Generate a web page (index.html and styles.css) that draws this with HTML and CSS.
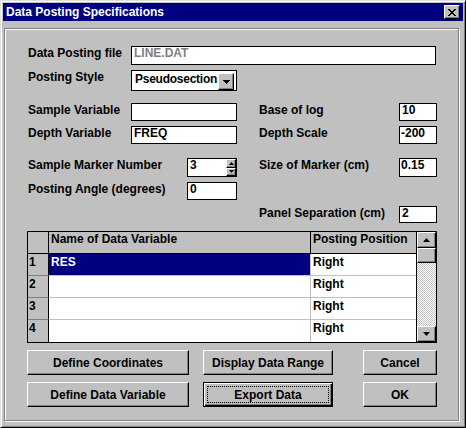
FILE: index.html
```html
<!DOCTYPE html>
<html>
<head>
<meta charset="utf-8">
<link rel="stylesheet" href="styles.css">
</head>
<body>
<div class="window">
  <div class="titlebar">
    <span class="title">Data Posting Specifications</span>
    <span class="close">
      <svg width="8" height="7" viewBox="0 0 8 7" shape-rendering="crispEdges">
        <rect x="0" y="0" width="2" height="1"/><rect x="6" y="0" width="2" height="1"/>
        <rect x="1" y="1" width="2" height="1"/><rect x="5" y="1" width="2" height="1"/>
        <rect x="2" y="2" width="4" height="1"/>
        <rect x="3" y="3" width="2" height="1"/>
        <rect x="2" y="4" width="4" height="1"/>
        <rect x="1" y="5" width="2" height="1"/><rect x="5" y="5" width="2" height="1"/>
        <rect x="0" y="6" width="2" height="1"/><rect x="6" y="6" width="2" height="1"/>
      </svg>
    </span>
  </div>
  <div class="group">
    <div class="row r-file">
      <span class="lbl lbl-a">Data Posting file</span>
      <div class="field disabled w305 h19">LINE.DAT</div>
    </div>
    <div class="row r-style">
      <span class="lbl lbl-a">Posting Style</span>
      <div class="combo">
        <span class="combo-text">Pseudosection</span>
        <span class="combo-btn raised">
          <svg width="7" height="4" viewBox="0 0 7 4" shape-rendering="crispEdges"><polygon points="0,0 7,0 3.5,4"/></svg>
        </span>
      </div>
    </div>
    <div class="row r-sec2">
      <div class="left">
        <span class="lbl lbl-a">Sample Variable</span>
        <div class="field w105"></div>
      </div>
      <div class="right">
        <span class="lbl lbl-r">Base of log</span>
        <div class="field w37">10</div>
      </div>
    </div>
    <div class="row r-gap5">
      <div class="left">
        <span class="lbl lbl-a">Depth Variable</span>
        <div class="field w105">FREQ</div>
      </div>
      <div class="right">
        <span class="lbl lbl-r">Depth Scale</span>
        <div class="field w37 tight">-200</div>
      </div>
    </div>
    <div class="row r-sec3">
      <div class="left">
        <span class="lbl lbl-b">Sample Marker Number</span>
        <div class="field spin w49 h19">
          <span class="spin-val">3</span>
          <span class="spin-btns">
            <span class="spin-btn raised"><svg width="5" height="3" viewBox="0 0 5 3"><polygon points="2.5,0 5,3 0,3"/></svg></span>
            <span class="spin-btn raised"><svg width="5" height="3" viewBox="0 0 5 3"><polygon points="0,0 5,0 2.5,3"/></svg></span>
          </span>
        </div>
      </div>
      <div class="right">
        <span class="lbl lbl-r">Size of Marker (cm)</span>
        <div class="field w37 h19 tight">0.15</div>
      </div>
    </div>
    <div class="row r-gap5">
      <div class="left">
        <span class="lbl lbl-b">Posting Angle (degrees)</span>
        <div class="field w49">0</div>
      </div>
    </div>
    <div class="row r-panel">
      <div class="left"></div>
      <div class="right">
        <span class="lbl lbl-r">Panel Separation (cm)</span>
        <div class="field w37 h17">2</div>
      </div>
    </div>

    <div class="grid">
      <div class="cells">
        <div class="grow head">
          <div class="cell num"></div>
          <div class="cell name">Name of Data Variable</div>
          <div class="cell pos">Posting Position</div>
        </div>
        <div class="grow">
          <div class="cell num">1</div>
          <div class="cell name selected">RES</div>
          <div class="cell pos">Right</div>
        </div>
        <div class="grow">
          <div class="cell num">2</div>
          <div class="cell name"></div>
          <div class="cell pos">Right</div>
        </div>
        <div class="grow">
          <div class="cell num">3</div>
          <div class="cell name"></div>
          <div class="cell pos">Right</div>
        </div>
        <div class="grow last">
          <div class="cell num">4</div>
          <div class="cell name"></div>
          <div class="cell pos">Right</div>
        </div>
      </div>
      <div class="scrollbar">
        <span class="sb-btn raised"><svg width="7" height="4" viewBox="0 0 7 4"><polygon points="3.5,0 7,4 0,4"/></svg></span>
        <span class="sb-thumb raised"></span>
        <span class="sb-track"></span>
        <span class="sb-btn raised"><svg width="7" height="4" viewBox="0 0 7 4"><polygon points="0,0 7,0 3.5,4"/></svg></span>
      </div>
    </div>

    <div class="btn-row first">
      <div class="btn b1">Define Coordinates</div>
      <div class="btn b2">Display Data Range</div>
      <div class="btn b3">Cancel</div>
    </div>
    <div class="btn-row second">
      <div class="btn b1">Define Data Variable</div>
      <div class="btn b2 default"><span class="focus">Export Data</span></div>
      <div class="btn b3">OK</div>
    </div>
  </div>
</div>
</body>
</html>
```

FILE: styles.css
```css
html, body {
  margin: 0;
  padding: 0;
  background: #c0c0c0;
}

body {
  font-family: "Liberation Sans", Arial, sans-serif;
  font-weight: bold;
  font-size: 12px;
  color: #000;
}

.window {
  box-sizing: border-box;
  width: 466px;
  height: 428px;
  background: #c0c0c0;
  border: 1px solid;
  border-color: #dfdfdf #000 #000 #dfdfdf;
  box-shadow: inset 1px 1px #fff, inset -1px -1px #808080;
  padding: 2px;
}

.titlebar {
  height: 18px;
  background: #000080;
  display: flex;
  align-items: flex-start;
  justify-content: space-between;
}

.title {
  color: #fff;
  line-height: 18px;
  padding-left: 3px;
  white-space: nowrap;
}

.close {
  box-sizing: border-box;
  width: 16px;
  height: 14px;
  margin: 2px 3px 0 0;
  background: #c0c0c0;
  border: 1px solid;
  border-color: #fff #000 #000 #fff;
  box-shadow: inset -1px -1px #808080;
  display: flex;
  align-items: center;
  justify-content: center;
  padding-right: 1px;
}

.close svg {
  fill: #000;
  display: block;
}

.group {
  box-sizing: border-box;
  width: 455px;
  height: 393px;
  margin: 7px 0 0 1px;
  border: 1px solid #808080;
  box-shadow: inset 1px 1px #fff, 1px 1px #fff;
  padding: 17px 0 0 23px;
}

.row {
  display: flex;
  align-items: flex-start;
}

.r-style { margin-top: 5px; }
.r-sec2 { margin-top: 12px; }
.r-gap5 { margin-top: 5px; }
.r-sec3 { margin-top: 14px; }
.r-panel { margin-top: 6px; }

.left {
  width: 231px;
  display: flex;
  align-items: flex-start;
  flex: none;
}

.right {
  display: flex;
  align-items: flex-start;
}

.lbl {
  line-height: 14px;
  white-space: nowrap;
  flex: none;
}

.lbl-a { width: 103px; }
.lbl-b { width: 159px; }
.lbl-r { width: 140px; }

.field {
  box-sizing: border-box;
  height: 18px;
  border: 1px solid #000;
  background: #fff;
  padding: 0 2px;
  line-height: 13px;
  white-space: nowrap;
  overflow: hidden;
  flex: none;
}

.field.tight { padding: 0 1px; }
.field.disabled { color: #808080; }

.w305 { width: 305px; }
.w105 { width: 106px; }
.w49 { width: 50px; }
.w37 { width: 38px; }
.h19 { height: 19px; }
.h17 { height: 17px; }

.combo {
  box-sizing: border-box;
  width: 106px;
  height: 21px;
  border: 1px solid #000;
  background: #fff;
  display: flex;
  align-items: flex-start;
}

.combo-text {
  flex: 1;
  overflow: hidden;
  white-space: nowrap;
  padding-left: 3px;
  line-height: 17px;
  letter-spacing: -0.25px;
}

.raised {
  box-sizing: border-box;
  background: #c0c0c0;
  border: 1px solid;
  border-color: #fff #000 #000 #fff;
  box-shadow: inset -1px -1px #808080;
  display: flex;
  align-items: center;
  justify-content: center;
}

.raised svg {
  display: block;
  fill: #000;
}

.combo-btn {
  width: 16px;
  height: 17px;
  margin: 2px 2px 0 0;
  flex: none;
}

.spin {
  display: flex;
  padding: 0 0 0 2px;
}

.spin-val {
  flex: 1;
}

.spin-btns {
  width: 10px;
  display: flex;
  flex-direction: column;
  margin: 0;
}

.spin-btn {
  flex: 1;
}

.grid {
  box-sizing: border-box;
  width: 410px;
  height: 112px;
  margin: 8px 0 0 -1px;
  border: 1px solid #000;
  background: #fff;
  display: flex;
}

.cells {
  width: 388px;
  display: flex;
  flex-direction: column;
}

.grow {
  display: grid;
  grid-template-columns: 21px 262px 105px;
  height: 22px;
}

.cell {
  box-sizing: border-box;
  border-bottom: 1px solid #c0c0c0;
  border-right: 1px solid #c0c0c0;
  line-height: 14px;
  padding: 1px 2px 0;
  white-space: nowrap;
  overflow: hidden;
}

.cell.pos { border-right: none; }

.cell.num {
  background: #c0c0c0;
  border-right: 1px solid #000;
  border-bottom-color: #808080;
  padding-left: 1px;
}

.head .cell {
  background: #c0c0c0;
  border-bottom: 1px solid #000;
  border-right-color: #000;
  padding-top: 0;
}

.head .cell.pos { border-right: none; }

.grow.last .cell { border-bottom: none; }

.cell.selected {
  background: #000080;
  color: #fff;
}

.scrollbar {
  width: 20px;
  border-left: 1px solid #000;
  box-sizing: border-box;
  display: flex;
  flex-direction: column;
}

.sb-btn {
  height: 16px;
  flex: none;
}

.sb-thumb {
  height: 15px;
  flex: none;
}

.sb-track {
  flex: 1;
  background: repeating-conic-gradient(#fff 0 25%, #c0c0c0 0 50%) 0 0 / 2px 2px;
}

.btn-row {
  display: flex;
  margin-left: -1px;
}

.btn-row.first { margin-top: 7px; }
.btn-row.second { margin-top: 7px; }

.btn {
  box-sizing: border-box;
  height: 25px;
  background: #c0c0c0;
  border: 1px solid;
  border-color: #fff #000 #000 #fff;
  box-shadow: inset -1px -1px #808080;
  display: flex;
  align-items: center;
  justify-content: center;
  white-space: nowrap;
  flex: none;
}

.b1 { width: 162px; margin-right: 14px; }
.b2 { width: 130px; margin-right: 30px; }
.b3 { width: 74px; }

.btn.default {
  border-color: #000;
  box-shadow: inset 1px 1px #fff, inset -1px -1px #000, inset -2px -2px #808080;
  padding: 3px;
  align-items: stretch;
}

.focus {
  flex: 1;
  border: 1px dotted #000;
  display: flex;
  align-items: center;
  justify-content: center;
}
```
